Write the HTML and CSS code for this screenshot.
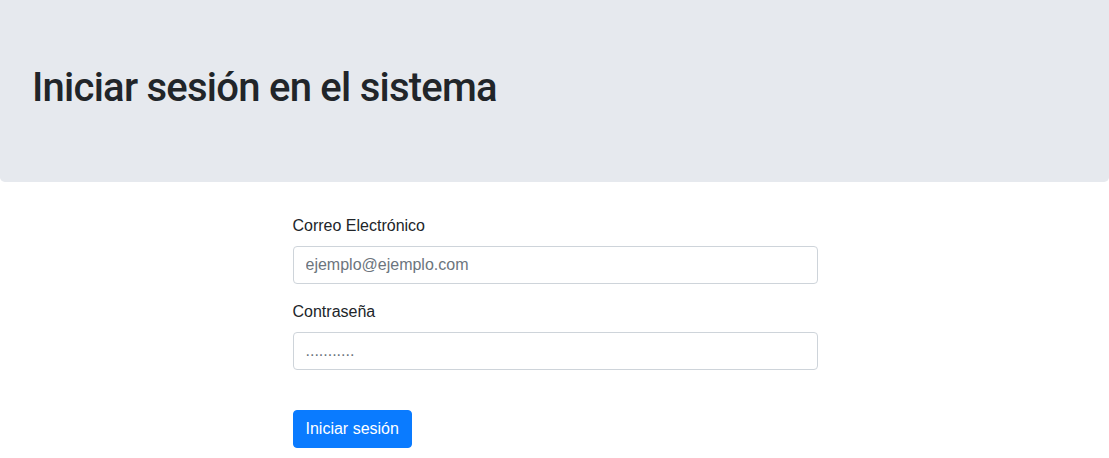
FILE: index.html
```html
<!DOCTYPE html>
<html lang="es">
<head>
<meta charset="utf-8">
<title>Iniciar sesión</title>
<link rel="stylesheet" href="styles.css">
</head>
<body>
<div class="jumbotron">
  <h1 class="title">Iniciar sesión en el sistema</h1>
</div>
<form class="login">
  <div class="form-group">
    <label class="label" for="email">Correo Electrónico</label>
    <input class="input" id="email" type="email" placeholder="ejemplo@ejemplo.com">
  </div>
  <div class="form-group">
    <label class="label" for="pass">Contraseña</label>
    <input class="input" id="pass" type="password" placeholder="...........">
  </div>
  <button class="btn" type="button">Iniciar sesión</button>
</form>
</body>
</html>
```
FILE: styles.css
```css
* { box-sizing: border-box; }
html, body { margin: 0; padding: 0; }
body {
  font-family: "Liberation Sans", Arial, sans-serif;
  font-size: 16px;
  line-height: 1.5;
  color: #212529;
  background: #fff;
}
.jumbotron {
  background: #e6e9ee;
  padding: 64px 32px;
  margin-bottom: 32px;
  border-radius: 0 0 4.8px 4.8px;
}
.title {
  margin: 0 0 6px;
  font-family: Roboto, "Liberation Sans", Arial, sans-serif;
  font-size: 40px;
  font-weight: 500;
  letter-spacing: -0.75px;
  line-height: 48px;
  color: #212529;
}
.login {
  width: 526px;
  margin: 0 auto;
  padding-left: 1px;
}
.form-group { margin-bottom: 16px; }
.label {
  display: block;
  margin-bottom: 8px;
  line-height: 24px;
}
.input {
  display: block;
  width: 100%;
  height: 38px;
  padding: 6px 12px;
  font-family: inherit;
  font-size: 16px;
  line-height: 24px;
  color: #495057;
  background: #fff;
  border: 1px solid #ced4da;
  border-radius: 4px;
  outline: none;
}
.input::placeholder { color: #6c757d; opacity: 1; }
.btn {
  display: inline-block;
  margin-top: 24px;
  height: 38px;
  padding: 6px 12px;
  font-family: inherit;
  font-size: 16px;
  line-height: 24px;
  color: #fff;
  background: #0a7bff;
  border: 1px solid #0a7bff;
  border-radius: 4px;
}
```
